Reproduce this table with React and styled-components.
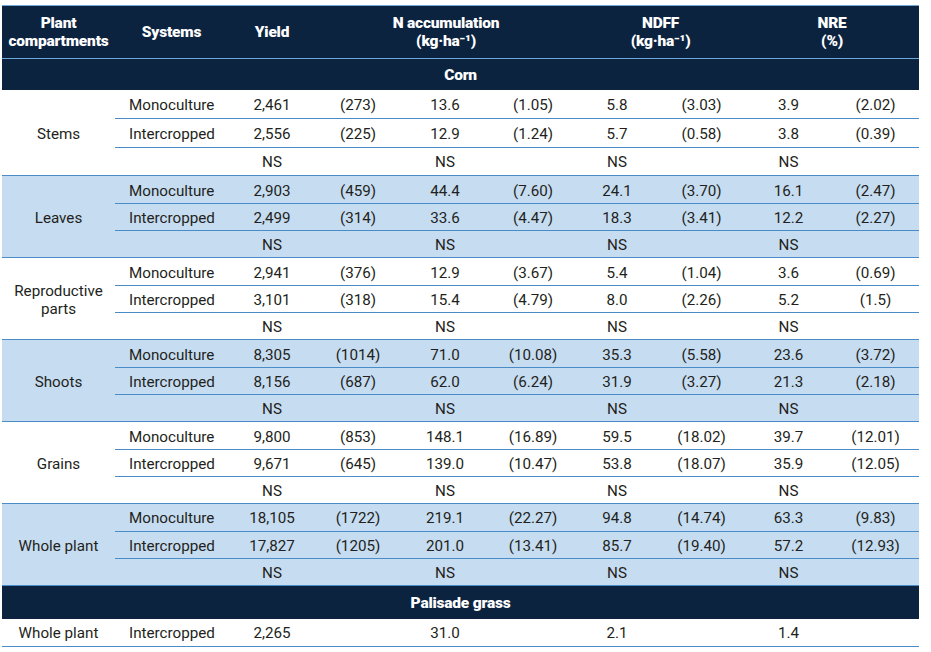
import React from 'react';
import styled, { createGlobalStyle } from 'styled-components';

const GlobalStyle = createGlobalStyle`
  body {
    margin: 0;
    background: #ffffff;
    font-family: Roboto, "Liberation Sans", sans-serif;
  }
`;

const Page = styled.div`
  padding: 5px 12px 0 2px;
`;

const Table = styled.table`
  width: 917px;
  border-collapse: collapse;
  table-layout: fixed;
  font-size: 15.2px;
  color: #231f20;
`;

const HeadRow = styled.tr`
  background: #0c2340;
  border-top: 1px solid #6fa6d8;
  border-bottom: 1px solid #6fa6d8;
`;

const HeadCell = styled.th`
  height: 52px;
  padding: 0 2px;
  color: #ffffff;
  font-weight: 900;
  font-size: 15.5px;
  line-height: 18px;
  letter-spacing: -0.2px;
  text-align: center;
  vertical-align: middle;
`;

const BandRow = styled.tr`
  background: #0c2340;
`;

const BandCell = styled.td`
  height: ${(p) => p.$h}px;
  padding: 0;
  color: #ffffff;
  font-weight: 900;
  font-size: 15.5px;
  letter-spacing: -0.2px;
  text-align: center;
`;

const GroupCell = styled.td`
  padding: 2px 4px 0;
  text-align: center;
  vertical-align: middle;
  line-height: 18px;
  background: ${(p) => (p.$shade ? '#c6dcf1' : '#ffffff')};
  border-bottom: 1px solid #4a8cc8;
`;

const Cell = styled.td`
  height: ${(p) => p.$h || 24.33}px;
  padding: 2px 0 0;
  line-height: 18px;
  text-align: ${(p) => (p.$left ? 'left' : 'center')};
  padding-left: ${(p) => (p.$left ? '14px' : '0')};
  background: ${(p) => (p.$shade ? '#c6dcf1' : '#ffffff')};
  border-bottom: 1px solid #4a8cc8;
  white-space: nowrap;
`;

const widths = [113, 113, 88, 84, 90, 86, 82, 87, 87, 87];

const groups = [
  {
    name: 'Stems',
    rows: [
      ['Monoculture', '2,461', '(273)', '13.6', '(1.05)', '5.8', '(3.03)', '3.9', '(2.02)'],
      ['Intercropped', '2,556', '(225)', '12.9', '(1.24)', '5.7', '(0.58)', '3.8', '(0.39)'],
    ],
  },
  {
    name: 'Leaves',
    rows: [
      ['Monoculture', '2,903', '(459)', '44.4', '(7.60)', '24.1', '(3.70)', '16.1', '(2.47)'],
      ['Intercropped', '2,499', '(314)', '33.6', '(4.47)', '18.3', '(3.41)', '12.2', '(2.27)'],
    ],
  },
  {
    name: 'Reproductive parts',
    rows: [
      ['Monoculture', '2,941', '(376)', '12.9', '(3.67)', '5.4', '(1.04)', '3.6', '(0.69)'],
      ['Intercropped', '3,101', '(318)', '15.4', '(4.79)', '8.0', '(2.26)', '5.2', '(1.5)'],
    ],
  },
  {
    name: 'Shoots',
    rows: [
      ['Monoculture', '8,305', '(1014)', '71.0', '(10.08)', '35.3', '(5.58)', '23.6', '(3.72)'],
      ['Intercropped', '8,156', '(687)', '62.0', '(6.24)', '31.9', '(3.27)', '21.3', '(2.18)'],
    ],
  },
  {
    name: 'Grains',
    rows: [
      ['Monoculture', '9,800', '(853)', '148.1', '(16.89)', '59.5', '(18.02)', '39.7', '(12.01)'],
      ['Intercropped', '9,671', '(645)', '139.0', '(10.47)', '53.8', '(18.07)', '35.9', '(12.05)'],
    ],
  },
  {
    name: 'Whole plant',
    rows: [
      ['Monoculture', '18,105', '(1722)', '219.1', '(22.27)', '94.8', '(14.74)', '63.3', '(9.83)'],
      ['Intercropped', '17,827', '(1205)', '201.0', '(13.41)', '85.7', '(19.40)', '57.2', '(12.93)'],
    ],
  },
];

const nsRow = ['', 'NS', '', 'NS', '', 'NS', '', 'NS', ''];

// the first group in the source sits a little taller than the others
const Group = ({ name, rows, shade, rowHeight }) => {
  const all = [...rows, nsRow];
  return all.map((row, i) => (
    <tr key={i}>
      {i === 0 && (
        <GroupCell rowSpan={3} $shade={shade}>
          {name}
        </GroupCell>
      )}
      {row.map((v, j) => (
        <Cell key={j} $left={j === 0} $shade={shade} $h={rowHeight}>
          {v}
        </Cell>
      ))}
    </tr>
  ));
};

const App = () => {
  return (
    <Page>
      <GlobalStyle />
      <Table>
        <colgroup>
          {widths.map((w, i) => (
            <col key={i} style={{ width: w }} />
          ))}
        </colgroup>
        <thead>
          <HeadRow>
            <HeadCell>
              Plant
              <br />
              compartments
            </HeadCell>
            <HeadCell>Systems</HeadCell>
            <HeadCell>Yield</HeadCell>
            <HeadCell colSpan={3}>
              N accumulation
              <br />
              (kg·ha⁻¹)
            </HeadCell>
            <HeadCell colSpan={2}>
              NDFF
              <br />
              (kg·ha⁻¹)
            </HeadCell>
            <HeadCell colSpan={2}>
              NRE
              <br />
              (%)
            </HeadCell>
          </HeadRow>
        </thead>
        <tbody>
          <BandRow>
            <BandCell colSpan={10} $h={31}>
              Corn
            </BandCell>
          </BandRow>
          {groups.map((g, i) => (
            <Group
              key={g.name}
              name={g.name}
              rows={g.rows}
              shade={i % 2 === 1}
              rowHeight={i === 0 ? 25.8 : 24.33}
            />
          ))}
          <BandRow>
            <BandCell colSpan={10} $h={33}>
              Palisade grass
            </BandCell>
          </BandRow>
          <tr>
            <GroupCell>Whole plant</GroupCell>
            <Cell $left>Intercropped</Cell>
            <Cell>2,265</Cell>
            <Cell />
            <Cell>31.0</Cell>
            <Cell />
            <Cell>2.1</Cell>
            <Cell />
            <Cell>1.4</Cell>
            <Cell />
          </tr>
        </tbody>
      </Table>
    </Page>
  );
};

export default App;
